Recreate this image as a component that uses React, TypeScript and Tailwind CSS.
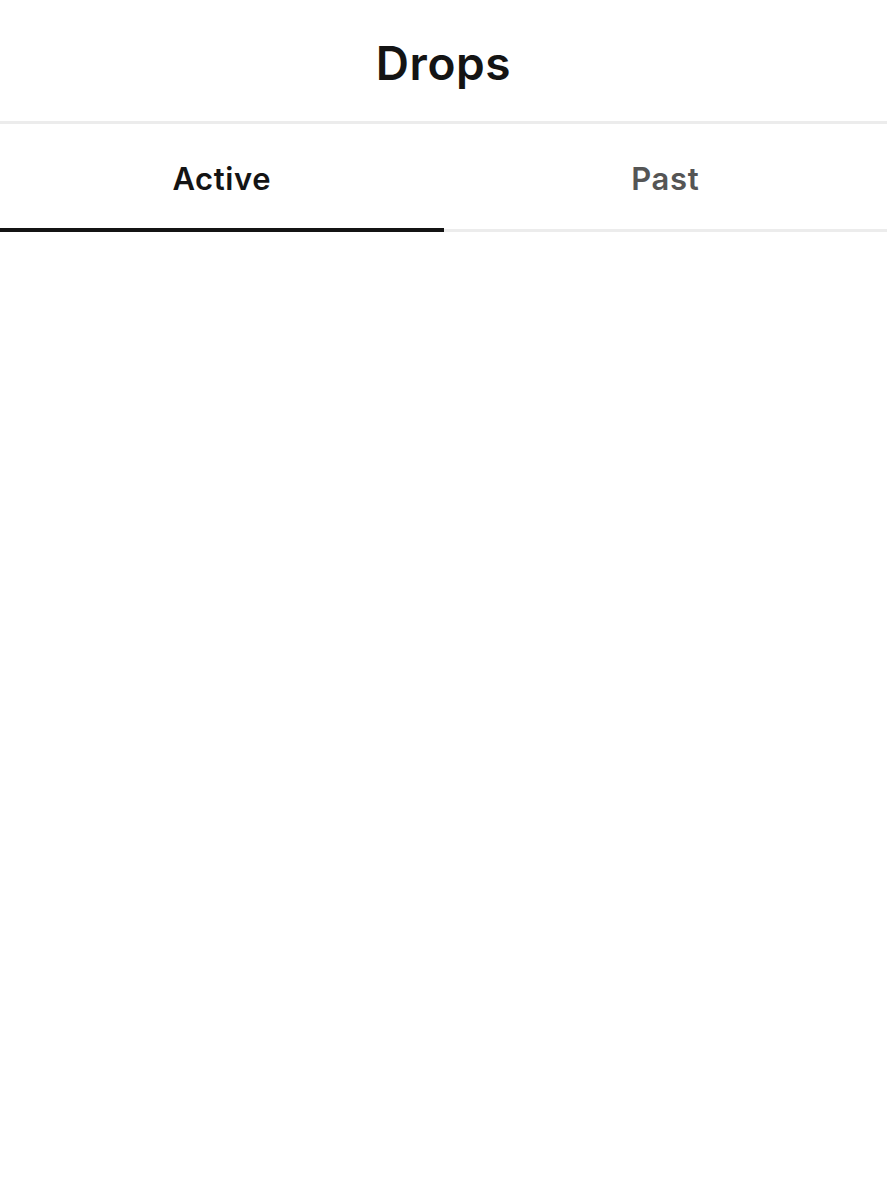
import { useState } from "react";

type Tab = "active" | "past";

function App() {
  const [tab, setTab] = useState<Tab>("active");

  return (
    <div className="min-h-screen bg-white font-['Inter',sans-serif]">
      <header className="h-[124px] pt-[4px] flex items-center justify-center border-b-[3px] border-[#ececec]">
        <h1 className="text-[46px] font-semibold tracking-[0.6px] text-[#141414] leading-none">Drops</h1>
      </header>

      <div className="flex">
        {(["active", "past"] as Tab[]).map((t) => {
          const selected = tab === t;
          return (
            <button key={t} onClick={() => setTab(t)} className="flex-1 flex flex-col">
              <div
                className={
                  "h-[104px] pt-[4px] w-full flex items-center justify-center text-[31px] tracking-[0.6px] font-semibold leading-none " +
                  (selected ? "text-[#141414]" : "text-[#555555]")
                }
              >
                {t === "active" ? "Active" : "Past"}
              </div>
              {selected ? (
                <div className="h-[4px] w-full bg-[#141414]" />
              ) : (
                <div className="h-[3px] mt-[1px] w-full bg-[#ececec]" />
              )}
            </button>
          );
        })}
      </div>
    </div>
  );
}

export default App;
